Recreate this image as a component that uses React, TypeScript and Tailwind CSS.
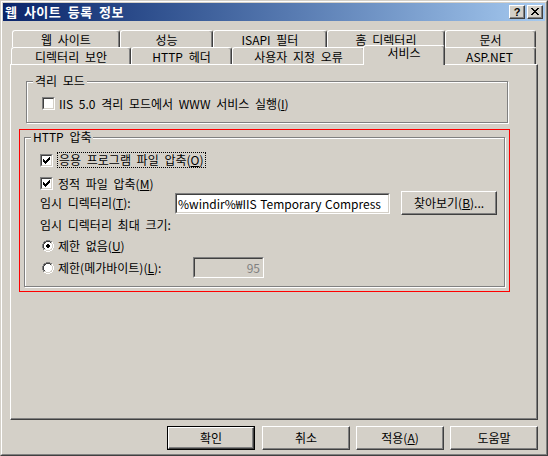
import type { ReactElement, ReactNode } from "react"

const CHECK = ["......#", ".....##", "#...###", "##.###.", "#####..", ".###...", "..#...."]
const CLOSE = ["##....##", ".##..##.", "..####..", "...##...", "..####..", ".##..##.", "##....##"]

const OUTER = [[4, 5, 6, 7], [2, 3, 8, 9], [1, 10], [1, 10], [0, 11], [0, 11], [0, 11], [0, 11], [1, 10], [1, 10], [2, 3, 8, 9], [4, 5, 6, 7]]
const INNER = [[], [4, 5, 6, 7], [2, 3, 8, 9], [2, 9], [1, 10], [1, 10], [1, 10], [1, 10], [2, 9], [2, 3, 8, 9], [4, 5, 6, 7], []]
const DOT = [[], [], [], [], [5, 6], [4, 5, 6, 7], [4, 5, 6, 7], [5, 6], [], [], [], []]

function Pixels({ rows, color }: { rows: string[]; color: string }) {
  return (
    <svg width={rows[0].length} height={rows.length} shapeRendering="crispEdges" className="block">
      {rows.flatMap((row, y) =>
        row.split("").map((c, x) =>
          c === "#" ? <rect key={`${x}-${y}`} x={x} y={y} width="1" height="1" fill={color} /> : null
        )
      )}
    </svg>
  )
}

function Checkbox({ checked }: { checked?: boolean }) {
  return (
    <div className="w-[13px] h-[13px] shrink-0 border border-t-[#808080] border-l-[#808080] border-b-white border-r-white">
      <div className="relative w-full h-full bg-white border border-t-[#404040] border-l-[#404040] border-b-[#d4d0c8] border-r-[#d4d0c8]">
        {checked && (
          <div className="absolute left-[1px] top-[1px]">
            <Pixels rows={CHECK} color="#000" />
          </div>
        )}
      </div>
    </div>
  )
}

function Radio({ checked }: { checked?: boolean }) {
  const cells: ReactElement[] = []
  INNER.forEach((cols, y) => {
    if (cols.length < 2) return
    const min = Math.min(...cols)
    const max = Math.max(...cols)
    cells.push(<rect key={`f${y}`} x={min + 1} y={y} width={max - min - 1} height="1" fill="#fff" />)
  })
  OUTER.forEach((cols, y) =>
    cols.forEach((x) =>
      cells.push(<rect key={`o${x}-${y}`} x={x} y={y} width="1" height="1" fill={x + y < 11 ? "#808080" : "#fff"} />)
    )
  )
  INNER.forEach((cols, y) =>
    cols.forEach((x) =>
      cells.push(<rect key={`i${x}-${y}`} x={x} y={y} width="1" height="1" fill={x + y < 11 ? "#404040" : "#d4d0c8"} />)
    )
  )
  if (checked) {
    DOT.forEach((cols, y) =>
      cols.forEach((x) => cells.push(<rect key={`d${x}-${y}`} x={x} y={y} width="1" height="1" fill="#000" />))
    )
  }
  return (
    <svg width="12" height="12" shapeRendering="crispEdges" className="block shrink-0">
      {cells}
    </svg>
  )
}

function Button({ children, className, isDefault }: { children: ReactNode; className: string; isDefault?: boolean }) {
  if (isDefault) {
    return (
      <div className={`border border-black ${className}`}>
        <div className="w-full h-full flex items-center justify-center border border-t-white border-l-white border-b-[#404040] border-r-[#404040] shadow-[inset_-1px_-1px_0_#808080]">
          {children}
        </div>
      </div>
    )
  }
  return (
    <div className={`flex items-center justify-center border border-t-white border-l-white border-b-[#404040] border-r-[#404040] shadow-[inset_-1px_-1px_0_#808080] ${className}`}>
      {children}
    </div>
  )
}

function GroupBox({ title, className, children }: { title: string; className: string; children: ReactNode }) {
  return (
    <div className={`relative border border-[#808080] shadow-[inset_1px_1px_0_#fff,1px_1px_0_#fff] ${className}`}>
      <span className="absolute -top-[8px] left-[6px] px-[2px] bg-[#d4d0c8] leading-[14px]">{title}</span>
      {children}
    </div>
  )
}

const row1 = [
  { label: "웹 사이트", w: "w-[108px]" },
  { label: "성능", w: "w-[93px]" },
  { label: "ISAPI 필터", w: "w-[114px]" },
  { label: "홈 디렉터리", w: "w-[118px]" },
  { label: "문서", w: "w-[91px]" },
]

const row2 = [
  { label: "디렉터리 보안", w: "w-[120px]" },
  { label: "HTTP 헤더", w: "w-[101px]" },
  { label: "사용자 지정 오류", w: "w-[133px]" },
  { label: "서비스", w: "w-[82px]", selected: true },
  { label: "ASP.NET", w: "w-[93px]" },
]

function Tab({ label, w, selected }: { label: string; w: string; selected?: boolean }) {
  if (selected) {
    return (
      <div className={`relative z-10 -mx-[2px] -mt-[2px] h-[20px] pt-[1px] bg-[#d4d0c8] flex justify-center items-start rounded-t-[3px] border-t border-l border-r border-t-white border-l-white border-r-[#404040] shadow-[inset_-1px_0_0_#808080] ${w}`}>
        <span className="leading-[12px]">{label}</span>
      </div>
    )
  }
  return (
    <div className={`h-[17px] shrink-0 flex justify-center items-start pt-[3px] rounded-t-[3px] border-t border-l border-r border-t-white border-l-white border-r-[#404040] shadow-[inset_-1px_0_0_#808080] ${w}`}>
      <span className="leading-[12px]">{label}</span>
    </div>
  )
}

export default function App() {
  return (
    <div className="w-[548px] h-[456px] bg-[#d4d0c8] text-black text-[12px] [word-spacing:3px] font-['Noto_Sans_CJK_KR',sans-serif] border border-t-[#d4d0c8] border-l-[#d4d0c8] border-b-[#404040] border-r-[#404040]">
      <div className="w-full h-full flex flex-col p-[1px] border border-t-white border-l-white border-b-[#808080] border-r-[#808080]">
        {/* title bar */}
        <div className="h-[18px] shrink-0 flex items-center pl-[2px] pr-[2px] bg-linear-to-r from-[#0a246a] to-[#a6caf0]">
          <span className="text-white font-bold text-[13px] tracking-[0.5px] leading-[14px]">웹 사이트 등록 정보</span>
          <div className="ml-auto flex gap-[2px]">
            <div className="w-[16px] h-[14px] bg-[#d4d0c8] flex justify-center border border-t-white border-l-white border-b-[#404040] border-r-[#404040] shadow-[inset_-1px_-1px_0_#808080]">
              <span className="font-['Liberation_Sans',sans-serif] font-bold text-[11px] leading-[12px]">?</span>
            </div>
            <div className="w-[16px] h-[14px] bg-[#d4d0c8] border border-t-white border-l-white border-b-[#404040] border-r-[#404040] shadow-[inset_-1px_-1px_0_#808080]">
              <div className="ml-[3px] mt-[2px]">
                <Pixels rows={CLOSE} color="#000" />
              </div>
            </div>
          </div>
        </div>

        {/* tabs */}
        <div className="mt-[9px] ml-[9px] flex h-[17px]">
          {row1.map((t) => (
            <Tab key={t.label} label={t.label} w={t.w} />
          ))}
        </div>
        <div className="ml-[8px] flex items-start h-[17px]">
          {row2.map((t) => (
            <Tab key={t.label} label={t.label} w={t.w} selected={t.selected} />
          ))}
        </div>

        {/* page */}
        <div className="ml-[7px] w-[528px] h-[356px] shrink-0 border border-t-white border-l-white border-b-[#404040] border-r-[#404040] shadow-[inset_-1px_-1px_0_#808080] flex flex-col items-start">
          <GroupBox title="격리 모드" className="ml-[15px] mt-[16px] w-[482px] h-[42px] shrink-0">
            <div className="ml-[15px] mt-[15px] h-[13px] flex items-center gap-[4px]">
              <Checkbox />
              <span className="leading-[14px]">
                IIS 5.0 격리 모드에서 WWW 서비스 실행(<u>I</u>)
              </span>
            </div>
          </GroupBox>

          <div className="ml-[8px] mt-[6px] w-[491px] h-[163px] shrink-0 border border-[#ff0000] pl-[4px] pt-[7px]">
            <GroupBox title="HTTP 압축" className="w-[481px] h-[150px] flex flex-col items-start">
              <div className="ml-[15px] mt-[14px] h-[16px] flex items-center gap-[4px]">
                <Checkbox checked />
                <span className="border border-dotted border-black px-[1px] leading-[14px]">
                  응용 프로그램 파일 압축(<u>O</u>)
                </span>
              </div>
              <div className="ml-[15px] mt-[9px] h-[13px] flex items-center gap-[5px]">
                <Checkbox checked />
                <span className="leading-[14px]">
                  정적 파일 압축(<u>M</u>)
                </span>
              </div>
              <div className="ml-[15px] mt-[1px] h-[24px] flex items-center">
                <span className="w-[135px] leading-[14px]">
                  임시 디렉터리(<u>T</u>):
                </span>
                <div className="w-[215px] h-[21px] border border-t-[#808080] border-l-[#808080] border-b-white border-r-white">
                  <div className="w-full h-full bg-white border border-t-[#404040] border-l-[#404040] border-b-[#d4d0c8] border-r-[#d4d0c8] whitespace-nowrap pl-[1px] leading-[17px] [word-spacing:1px]">
                    %windir%₩IIS Temporary Compress
                  </div>
                </div>
                <Button className="ml-[11px] w-[96px] h-[24px]">
                  <span className="leading-[14px]">
                    찾아보기(<u>B</u>)...
                  </span>
                </Button>
              </div>
              <div className="ml-[15px] mt-[3px] leading-[14px]">임시 디렉터리 최대 크기:</div>
              <div className="ml-[17px] mt-[8px] h-[12px] flex items-center gap-[4px]">
                <Radio checked />
                <span className="leading-[14px]">
                  제한 없음(<u>U</u>)
                </span>
              </div>
              <div className="ml-[17px] mt-[5px] h-[21px] flex items-center">
                <Radio />
                <span className="ml-[4px] w-[135px] leading-[14px]">
                  제한(메가바이트)(<u>L</u>):
                </span>
                <div className="w-[71px] h-[21px] border border-t-[#808080] border-l-[#808080] border-b-white border-r-white">
                  <div className="w-full h-full bg-[#d4d0c8] border border-t-[#404040] border-l-[#404040] border-b-[#d4d0c8] border-r-[#d4d0c8] text-right pr-[2px] text-[#808080] leading-[17px]">
                    95
                  </div>
                </div>
              </div>
            </GroupBox>
          </div>
        </div>

        {/* dialog buttons */}
        <div className="mt-[6px] flex justify-end pr-[7px]">
          <Button isDefault className="w-[88px] h-[24px]">
            <span className="leading-[14px]">확인</span>
          </Button>
          <Button className="ml-[7px] w-[88px] h-[24px]">
            <span className="leading-[14px]">취소</span>
          </Button>
          <Button className="ml-[6px] w-[88px] h-[24px]">
            <span className="leading-[14px]">
              적용(<u>A</u>)
            </span>
          </Button>
          <Button className="ml-[6px] w-[88px] h-[24px]">
            <span className="leading-[14px]">도움말</span>
          </Button>
        </div>
      </div>
    </div>
  )
}
